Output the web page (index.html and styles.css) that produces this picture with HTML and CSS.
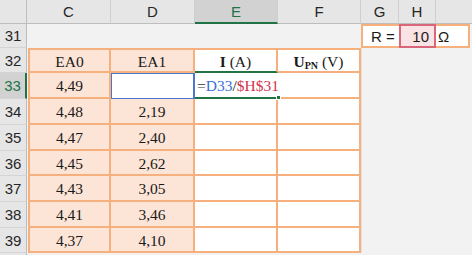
FILE: index.html
```html
<!DOCTYPE html>
<html lang="en">
<head>
<meta charset="UTF-8">
<title>Sheet</title>
<link rel="stylesheet" href="styles.css">
</head>
<body>

<div class="sheet">
  <!-- column headers -->
  <div class="hd corner"></div>
  <div class="hd col">C</div>
  <div class="hd col">D</div>
  <div class="hd col active-col">E</div>
  <div class="hd col">F</div>
  <div class="hd col">G</div>
  <div class="hd col">H</div>
  <div class="hd col last"></div>

  <!-- row 31 -->
  <div class="hd row">31</div>
  <div class="blank span4"></div>
  <div class="param r-label">R =</div>
  <div class="param r-value">10</div>
  <div class="param r-unit">&Omega;</div>

  <!-- row 32 -->
  <div class="hd row">32</div>
  <div class="cell fill top left">EA0</div>
  <div class="cell fill top">EA1</div>
  <div class="cell top head-e"><b>I</b>&nbsp;(A)</div>
  <div class="cell top"><b>U<sub>PN</sub></b>&nbsp;(V)</div>
  <div class="blank side"></div>

  <!-- row 33 -->
  <div class="hd row active-row">33</div>
  <div class="cell fill left">4,49</div>
  <div class="cell ref"></div>
  <div class="cell editing">
    <span class="caret"></span><span class="eq">=</span><span class="blue">D33</span>/<span class="red">$H$31</span>
    <span class="handle"></span>
  </div>
  <div class="cell overflow"></div>

  <div class="hd row">34</div>
  <div class="cell fill left">4,48</div>
  <div class="cell fill">2,19</div>
  <div class="cell"></div>
  <div class="cell"></div>

  <div class="hd row">35</div>
  <div class="cell fill left">4,47</div>
  <div class="cell fill">2,40</div>
  <div class="cell"></div>
  <div class="cell"></div>

  <div class="hd row">36</div>
  <div class="cell fill left">4,45</div>
  <div class="cell fill">2,62</div>
  <div class="cell"></div>
  <div class="cell"></div>

  <div class="hd row">37</div>
  <div class="cell fill left">4,43</div>
  <div class="cell fill">3,05</div>
  <div class="cell"></div>
  <div class="cell"></div>

  <div class="hd row">38</div>
  <div class="cell fill left">4,41</div>
  <div class="cell fill">3,46</div>
  <div class="cell"></div>
  <div class="cell"></div>

  <div class="hd row">39</div>
  <div class="cell fill left">4,37</div>
  <div class="cell fill">4,10</div>
  <div class="cell"></div>
  <div class="cell"></div>

  <div class="hd row"></div>
  <div class="blank span7"></div>
</div>

</body>
</html>
```

FILE: styles.css
```css
/* Page */
body {
  margin: 0;
  background-color: #f2f2f2;
  overflow: hidden;
}

/* Grid of the sheet */
.sheet {
  display: grid;
  grid-template-columns: 27px 84px 84px 83px 83px 38px 37px 36px;
  grid-template-rows: 24px 24px 25px 26px 26px 26px 25px 26px 26px 25px 10px;
  width: 472px;
}

.sheet > div {
  box-sizing: border-box;
}

/* Row and column headers */
.hd {
  background-color: #e6e6e6;
  color: #262626;
  font-family: "Liberation Sans", Arial, sans-serif;
  font-size: 15px;
  display: flex;
  align-items: center;
  justify-content: center;
}

.hd.col {
  border-right: 1px solid #cfcfcf;
  border-bottom: 1px solid #bdbdbd;
}

.hd.corner {
  border-right: 1px solid #bdbdbd;
  border-bottom: 1px solid #bdbdbd;
}

.hd.last {
  border-right: none;
}

.hd.row {
  border-right: 1px solid #bdbdbd;
  border-bottom: 1px solid #d4d4d4;
}

.hd.active-col {
  background-color: #d2d2d2;
  color: #217346;
  border-bottom: 2px solid #217346;
}

.hd.active-row {
  background-color: #d2d2d2;
  color: #217346;
  border-right: 2px solid #217346;
}

/* Empty areas */
.blank {
  background-color: #f2f2f2;
}

.span4 {
  grid-column: span 4;
}

.span7 {
  grid-column: span 7;
}

.side {
  grid-column: span 3;
  grid-row: span 8;
  border-left: 1px solid #e2e2e2;
}

/* Parameter cells R = 10 Ω */
.param {
  background-color: #fff;
  font-family: "Liberation Sans", Arial, sans-serif;
  font-size: 15px;
  color: #1a1a1a;
  display: flex;
  align-items: center;
  border-top: 2px solid #f5b07e;
  border-bottom: 2px solid #f5b07e;
}

.r-label {
  border-left: 2px solid #f5b07e;
  padding-left: 8px;
}

.r-value {
  background-color: #fae3e5;
  border: 2px solid #d9677a;
  justify-content: flex-end;
  padding-right: 5px;
}

.r-unit {
  border-right: 2px solid #f5b07e;
  margin-right: 2px;
  padding-left: 2px;
}

/* Table cells */
.cell {
  background-color: #fff;
  font-family: "Liberation Serif", "Times New Roman", serif;
  font-size: 15.5px;
  color: #1a1a1a;
  display: flex;
  align-items: center;
  justify-content: center;
  padding-top: 2px;
  border-right: 2px solid #f5b07e;
  border-bottom: 2px solid #f5b07e;
}

.cell.top {
  border-top: 2px solid #f5b07e;
}

.cell.left {
  border-left: 2px solid #f5b07e;
  margin-left: 1px;
}

.cell.fill {
  background-color: #fce4d6;
}

.cell sub {
  font-size: 10px;
  vertical-align: -2px;
}

.cell.head-e {
  border-bottom: 2px solid #217346;
}

/* Referenced cell D33 */
.cell.ref {
  border: 1px solid #4a78d0;
  border-right: 2px solid #4a78d0;
}

/* Cell being edited */
.cell.editing {
  position: relative;
  justify-content: flex-start;
  padding-left: 2px;
  border-right: none;
  border-bottom: 2px solid #217346;
  font-size: 15.5px;
}

.caret {
  display: inline-block;
  width: 1px;
  height: 18px;
  background-color: #555;
}

.eq {
  color: #333;
}

.blue {
  color: #3b6fd6;
}

.red {
  color: #d2334a;
}

.handle {
  position: absolute;
  right: -3px;
  bottom: -3px;
  width: 5px;
  height: 5px;
  background-color: #217346;
  border: 1px solid #fff;
  box-sizing: border-box;
}

.cell.overflow {
  border-bottom: 2px solid #f5b07e;
}
```
